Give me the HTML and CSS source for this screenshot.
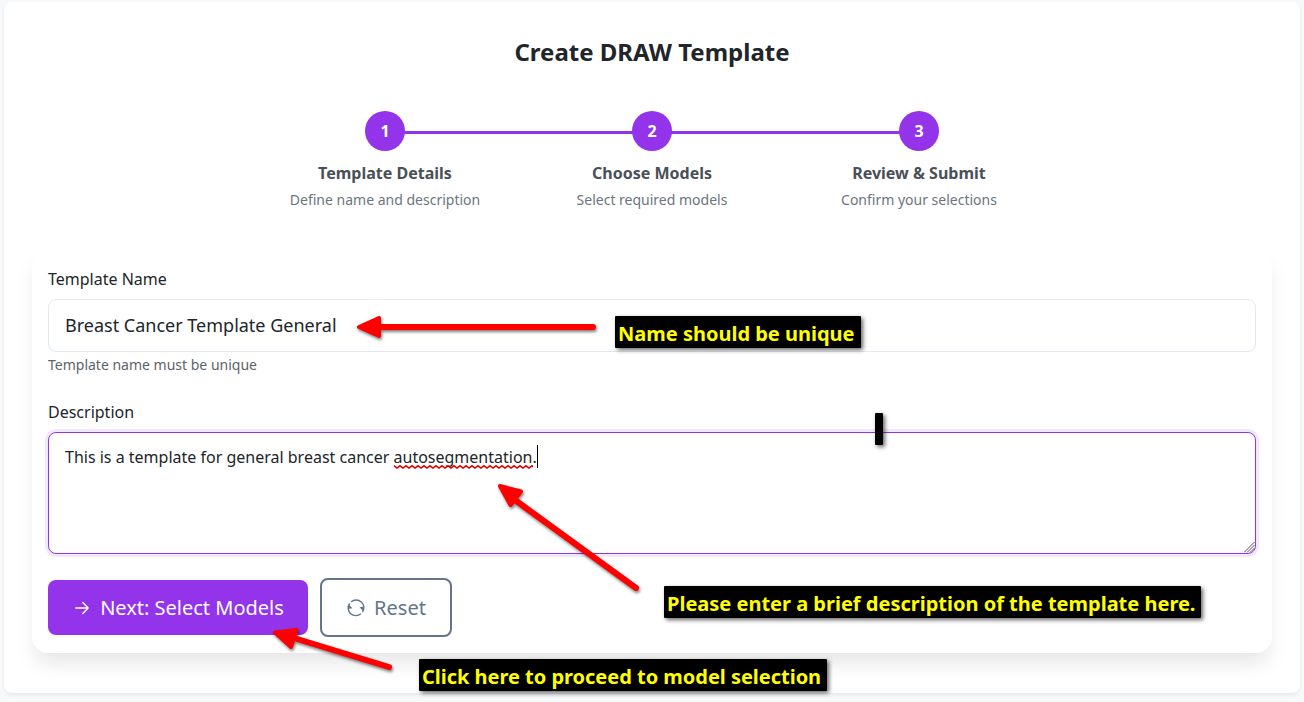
FILE: index.html
```html
<!DOCTYPE html>
<html lang="en">
<head>
<meta charset="utf-8">
<title>Create DRAW Template</title>
<link rel="stylesheet" href="styles.css">
</head>
<body>
<main class="page-card">
  <h1 class="title">Create DRAW Template</h1>
  <div class="steps">
    <div class="step"><div class="step-number">1</div><div class="step-name">Template Details</div><div class="step-hint">Define name and description</div></div>
    <div class="step"><div class="step-number">2</div><div class="step-name">Choose Models</div><div class="step-hint">Select required models</div></div>
    <div class="step"><div class="step-number">3</div><div class="step-name">Review &amp; Submit</div><div class="step-hint">Confirm your selections</div></div>
  </div>
  <section class="form-card">
    <div class="label">Template Name</div>
    <div class="input">Breast Cancer Template General</div>
    <div class="help">Template name must be unique</div>
    <div class="label">Description</div>
    <div class="textarea">This is a template for general breast cancer <span class="misspelt">autosegmentation<svg class="squiggle" width="139" height="4"><defs><pattern id="wave" width="6" height="4" patternUnits="userSpaceOnUse"><path d="M-1 0.3L0 0.7 3 3 6 0.7 7 0.3" fill="none" stroke="#e00000" stroke-width="1.5"/></pattern></defs><rect width="139" height="4" fill="url(#wave)"/></svg></span>.<span class="caret"></span>
      <svg class="grip" width="11" height="11" viewBox="0 0 11 11"><path d="M0 10.5L10.5 0M3 10.5L10.5 3M6 10.5L10.5 6" stroke="#555" fill="none"/></svg>
    </div>
    <div class="actions">
      <button class="button primary"><svg width="20" height="20" viewBox="0 0 20 20" fill="none" stroke="currentColor" stroke-width="1.4" stroke-linecap="round" stroke-linejoin="round"><path d="M3.700 10H16M10.800 4.600L16.200 10L10.800 15.400"/></svg><span>Next: Select Models</span></button>
      <button class="button outline"><svg width="20" height="20" viewBox="0 0 20 20" fill="none" stroke="currentColor" stroke-width="1.4"><path d="M5.100 3.800A7.700 7.700 0 0 1 16.400 14.100M14.900 15.800A7.700 7.700 0 0 1 3.600 5.500"/><path d="M13.600 9.300L18 8.600L17.400 13.400ZM6.400 10.300L2 11L2.600 6.200Z" fill="currentColor" stroke="none"/></svg><span>Reset</span></button>
    </div>
  </section>
</main>
<div class="note note-name">Name should be unique</div>
<div class="note note-empty"></div>
<div class="note note-description">Please enter a brief description of the template here.</div>
<div class="note note-next">Click here to proceed to model selection</div>
<svg class="arrows" width="1304" height="702" fill="#f00" stroke="#f00" stroke-linejoin="round" stroke-linecap="round">
  <g><path d="M380 327H593" stroke-width="6"/><path d="M359 327L379 318V336Z" stroke-width="4"/></g>
  <g><path d="M515 500L636 588" stroke-width="6"/><path d="M500 486L521 491.5L510.500 505Z" stroke-width="4"/></g>
  <g><path d="M294 638L389 667" stroke-width="6"/><path d="M275 632.500L296.500 630L291 647Z" stroke-width="4"/></g>
</svg>
</body>
</html>
```
FILE: styles.css
```css
* { box-sizing: border-box; }
body {
  margin: 0;
  padding: 2px 4px 9px;
  height: 702px;
  overflow: hidden;
  background: #f8f9fb;
  color: #212529;
  font: 16px/24px "Noto Sans", sans-serif;
}
.page-card {
  height: 691px;
  padding: 34px 28px 0;
  background: #fff;
  border-radius: 8px;
  box-shadow: 0 2px 4px rgba(0, 0, 0, .07);
}
.title { margin: 0; font-size: 24px; line-height: 32px; font-weight: 700; text-align: center; }
.steps { width: 801px; margin: 43px auto 0; display: grid; grid-template-columns: repeat(3, 267px); }
.step { position: relative; display: flex; flex-direction: column; align-items: center; }
.step:not(:last-child)::after {
  content: "";
  position: absolute;
  top: 20px;
  left: 50%;
  width: 100%;
  height: 3px;
  background: #9333ea;
}
.step-number {
  position: relative;
  z-index: 1;
  width: 40px;
  height: 40px;
  border-radius: 50%;
  background: #9333ea;
  color: #fff;
  font-weight: 700;
  line-height: 40px;
  text-align: center;
}
.step-name { margin-top: 10px; color: #495057; font-weight: 700; }
.step-hint { margin-top: 4px; color: #6c757d; font-size: 14px; line-height: 21px; }
.form-card {
  height: 403px;
  margin-top: 40px;
  padding: 17px 16px 0;
  border-radius: 16px;
  background: #fff;
  box-shadow: 0 13px 20px -3px rgba(0, 0, 0, .1);
}
.input {
  height: 53px;
  margin-top: 8px;
  padding: 12px 16px;
  border: 1px solid #e2e8f0;
  border-radius: 8px;
  font-size: 18px;
  line-height: 27px;
}
.help { margin: 2px 0 25px; color: #5c636a; font-size: 14px; line-height: 21px; }
.textarea {
  position: relative;
  height: 122px;
  margin-top: 8px;
  padding: 12px 16px;
  border: 1px solid #9333ea;
  border-radius: 8px;
  box-shadow: 0 0 0 3px #f2e8fd;
}
.misspelt { position: relative; }
.squiggle { position: absolute; left: 0; bottom: -1px; }
.caret { display: inline-block; width: 1px; height: 23px; vertical-align: -6px; margin: -4px 0; background: #000; position: relative; top: -5px; }
.grip { position: absolute; right: 0; bottom: 0; }
.actions { display: flex; align-items: center; gap: 12px; margin-top: 24px; }
.button {
  display: flex;
  align-items: center;
  justify-content: center;
  border-radius: 8px;
  font: 20px/30px "Noto Sans", sans-serif;
}
.primary { width: 260px; height: 55px; gap: 8px; border: 0; background: #9333ea; color: #fff; }
.outline { width: 132px; height: 59px; gap: 8px; border: 2px solid #64748b; background: #fff; color: #64748b; }
.note {
  position: absolute;
  height: 32px;
  padding-left: 3px;
  border-radius: 1px;
  background: #000;
  color: #ff0;
  font-size: 20px;
  line-height: 35px;
  font-weight: 700;
  white-space: nowrap;
  box-shadow: 2px 2px 4px rgba(0, 0, 0, .6);
}
.note-name { left: 615px; top: 316px; width: 246px; }
.note-empty { left: 875px; top: 413px; width: 8px; }
.note-description { left: 664px; top: 586px; width: 537px; }
.note-next { left: 419px; top: 659px; width: 408px; letter-spacing: -.02px; }
.arrows { position: absolute; left: 0; top: 0; pointer-events: none; }
.arrows g { filter: drop-shadow(1px 2px 1.5px rgba(0, 0, 0, .5)); }
```
